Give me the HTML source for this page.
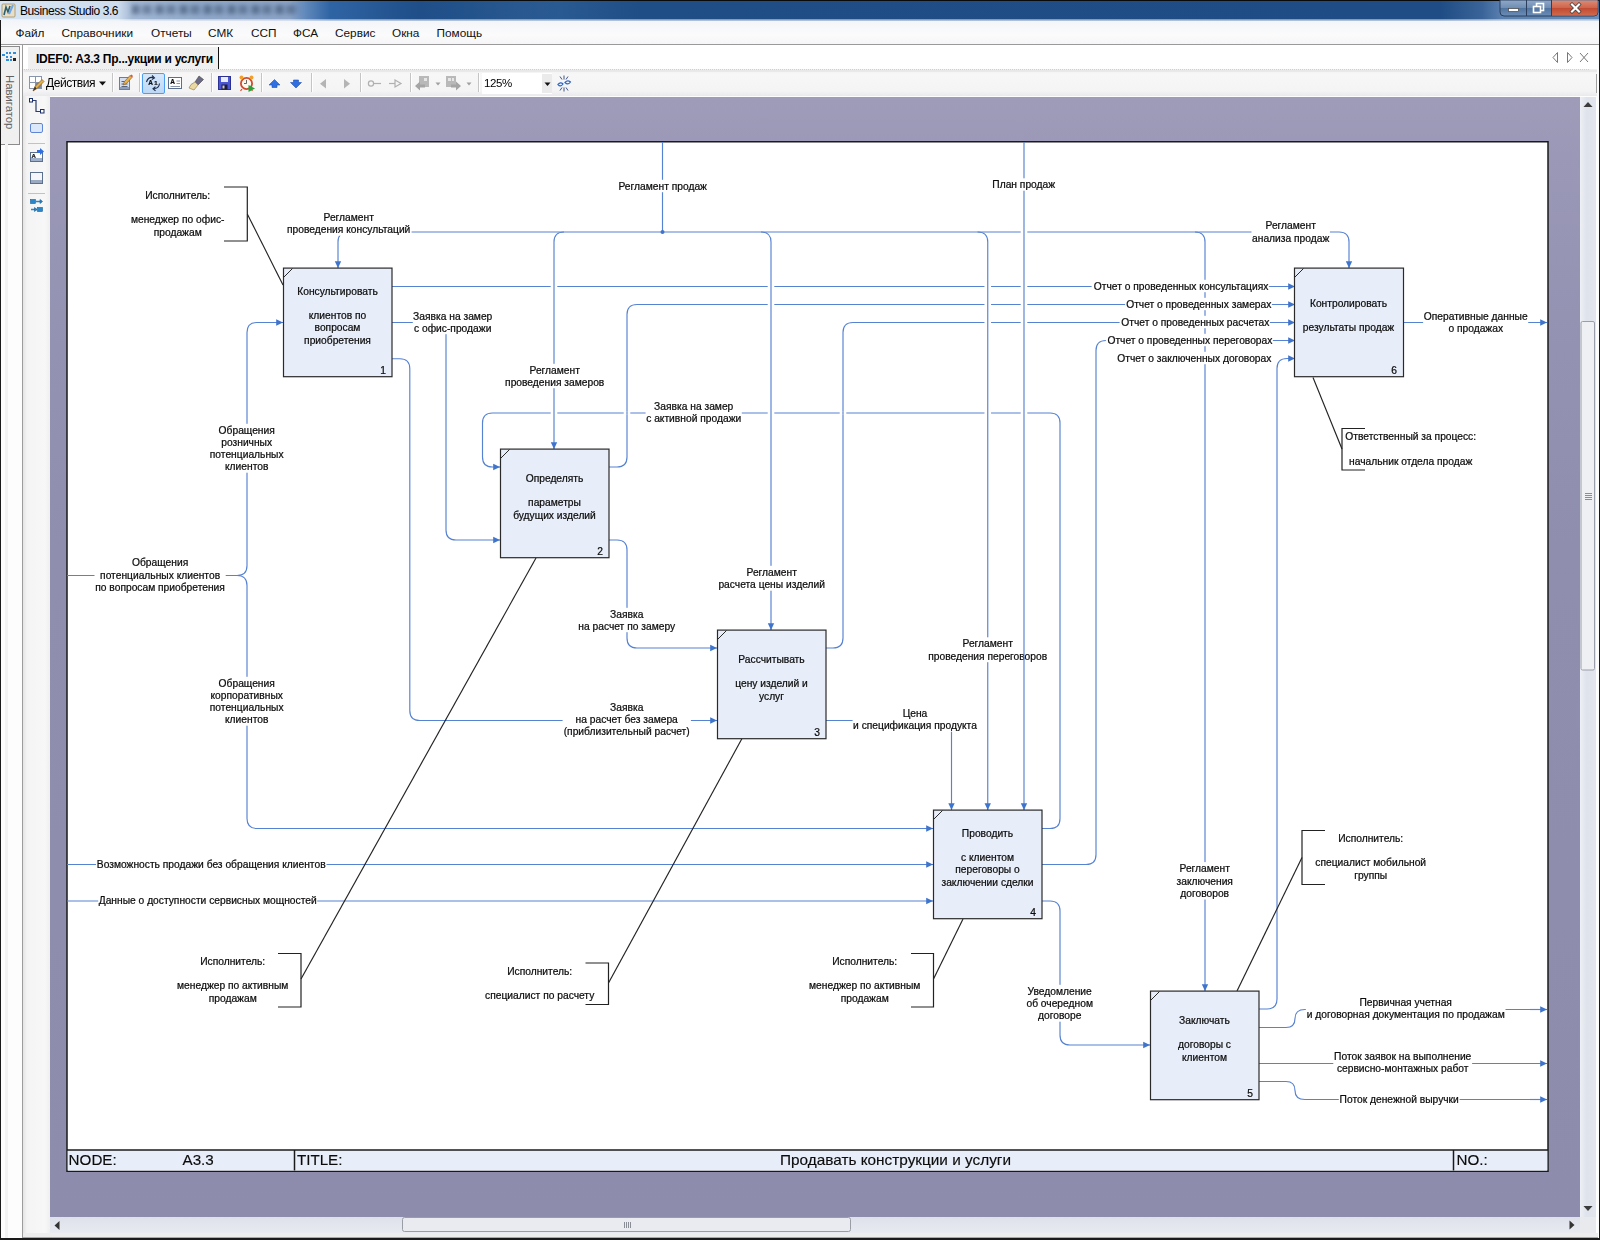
<!DOCTYPE html>
<html lang="ru">
<head>
<meta charset="utf-8">
<title>Business Studio 3.6</title>
<style>
html,body{margin:0;padding:0;}
body{width:1600px;height:1240px;overflow:hidden;position:relative;background:#fdfdfd;font-family:"Liberation Sans",sans-serif;}
.abs{position:absolute;}
#titlebar{left:0;top:0;width:1600px;height:21px;background:linear-gradient(90deg,#d6e4f3 0px,#cedded 118px,#a3b8d5 132px,#8fa8c9 200px,#8aa3c6 290px,#5f88bb 306px,#2f64a4 330px,#1f4e88 420px,#28588f 520px,#2a5a92 560px,#1f4d86 640px,#1f4c84 1440px,#3a6499 1482px,#5a80b0 1502px,#6a8fbc 1600px);}
#tblur{left:132px;top:5px;width:168px;height:9px;background:repeating-linear-gradient(90deg,rgba(50,70,100,.55) 0 7px,rgba(50,70,100,.15) 7px 11px,rgba(50,70,100,.45) 11px 19px,rgba(50,70,100,.1) 19px 24px);filter:blur(2.2px);}
#thl{left:0;top:19px;width:1600px;height:2px;background:linear-gradient(180deg,rgba(255,255,255,.35),rgba(255,255,255,.75));}
#titlebar .t{left:20px;top:3.5px;font-size:12px;letter-spacing:-0.42px;color:#000;white-space:nowrap;line-height:15px;}
#menubar{left:1px;top:21px;width:1598px;height:23px;background:linear-gradient(180deg,#f4f5f8 0%,#fbfbfc 60%,#f6f6f8 100%);border-bottom:1px solid #9a9a9a;}
#menubar span{position:absolute;top:5px;font-size:11.8px;color:#111;white-space:nowrap;line-height:14px;}
#tabrow{left:23px;top:45px;width:1575px;height:24px;background:#fff;}
#tab{left:28px;top:47px;width:190px;height:22px;background:#f0f0f0;border-right:1.5px solid #111;}
#tab span{position:absolute;left:8px;top:5px;font-size:12px;font-weight:bold;letter-spacing:-0.23px;white-space:nowrap;color:#000;line-height:14px;}
#toolbar{left:23px;top:69px;width:1574px;height:27px;background:linear-gradient(180deg,#efefef 0,#f7f7f7 5px,#f4f4f4 22px,#e9e9ee 27px);}
#navstrip{left:0;top:46px;width:18px;height:97px;background:#f0f0f0;border:1px solid #8c8c8c;}
#navtext{left:-17px;top:95px;width:54px;height:14px;transform:rotate(90deg);font-size:11.3px;color:#606060;letter-spacing:0px;line-height:14px;white-space:nowrap;text-align:center;}
#palette{left:23px;top:96px;width:27px;height:1137px;background:linear-gradient(90deg,#e4e4e4 0,#f4f4f4 4px,#f7f7f7 22px,#efefef 27px);}
#botband{left:23px;top:1233px;width:1575px;height:4px;background:#ededed;border-bottom:1px solid #a8a8a8;}
#leftline{left:22px;top:45px;width:1px;height:1193px;background:#9c9c9c;}
#canvas{left:50px;top:97px;width:1530px;height:1120px;background:linear-gradient(180deg,#9f9cba 0px,#9a98b6 60px,#9492b2 250px,#8f8eae 450px,#8d8cad 1120px);}
#vscroll{left:1580px;top:97px;width:16px;height:1120px;background:linear-gradient(90deg,#eef0f4,#dfe3ec 40%,#e2e5ee);}
#hscroll{left:50px;top:1217px;width:1530px;height:16px;background:linear-gradient(180deg,#dee1ea,#e8eaf0);}
#corner{left:1580px;top:1217px;width:16px;height:16px;background:#e9eaee;}
#page{left:66.25px;top:141px;width:1479.5px;height:1028px;background:#fff;border:1.5px solid #1a1a1a;}
#tblock{left:67.75px;top:1149.25px;width:1479.5px;height:21.25px;background:#e8eef9;border-top:1.5px solid #1a1a1a;box-sizing:border-box;}
#tblock span{position:absolute;top:0.5px;font-size:15.2px;line-height:18px;color:#111;white-space:nowrap;}
svg .tb text{font-size:15.2px;stroke-width:0.15px;}
svg text{font-family:"Liberation Sans",sans-serif;font-size:10.25px;fill:#0c0c0c;stroke:#0c0c0c;stroke-width:0.22px;}
.sep{position:absolute;top:73px;width:1px;height:19px;background:#c5c5c5;border-right:1px solid #fff;}
</style>
</head>
<body>
<div id="titlebar" class="abs"><div id="tblur" class="abs"></div><div id="thl" class="abs"></div><div class="abs t">Business Studio 3.6</div></div>
<div id="menubar" class="abs">
<span style="left:14.5px">Файл</span><span style="left:60.5px">Справочники</span><span style="left:150px">Отчеты</span><span style="left:207px">СМК</span><span style="left:250px">ССП</span><span style="left:292px">ФСА</span><span style="left:334px">Сервис</span><span style="left:391px">Окна</span><span style="left:435.5px">Помощь</span>
</div>
<div id="tabrow" class="abs"></div>
<div id="tab" class="abs"><span>IDEF0: A3.3 Пр...укции и услуги</span></div>
<div id="toolbar" class="abs"></div>
<div id="navstrip" class="abs"></div>
<div id="navtext" class="abs">Навигатор</div>
<div id="palette" class="abs"></div>
<div id="botband" class="abs"></div>
<div id="leftline" class="abs"></div>
<div id="canvas" class="abs"></div>
<div id="vscroll" class="abs"></div>
<div id="hscroll" class="abs"></div>
<div id="corner" class="abs"></div>
<svg class="abs" style="left:0;top:0;will-change:transform" width="1600" height="1240" viewBox="0 0 1600 1240">
<rect x="67" y="141.75" width="1481" height="1029.5" fill="#fff" stroke="#1a1a1a" stroke-width="1.5"/>
<rect x="67.75" y="1150" width="1479.5" height="20.5" fill="#e8eef9"/>
<line x1="67" y1="1150" x2="1548" y2="1150" stroke="#1a1a1a" stroke-width="1.5"/>
<g class="tb"><text x="68.6" y="1165.3">NODE:</text><text x="182.5" y="1165.3">A3.3</text><text x="296.9" y="1165.3">TITLE:</text><text x="895.5" y="1165.3" text-anchor="middle" style="font-size:15.35px">Продавать конструкции и услуги</text><text x="1456.5" y="1165.3">NO.:</text></g>
<path d="M348,232 L1339,232" fill="none" stroke="#5682d2" stroke-width="1.15"/>
<path d="M392,286.5 L1295,286.5" fill="none" stroke="#5682d2" stroke-width="1.15"/>
<polygon points="1295,286.5 1288.20,289.70 1288.20,283.30" fill="#3f74cc"/>
<path d="M609,467 L617.00,467.00 Q627,467 627.00,457.00 L627.00,314.50 Q627,304.5 637.00,304.50 L1295,304.5" fill="none" stroke="#5682d2" stroke-width="1.15"/>
<polygon points="1295,304.5 1288.20,307.70 1288.20,301.30" fill="#3f74cc"/>
<path d="M825,648 L833.00,648.00 Q843,648 843.00,638.00 L843.00,332.50 Q843,322.5 853.00,322.50 L1295,322.5" fill="none" stroke="#5682d2" stroke-width="1.15"/>
<polygon points="1295,322.5 1288.20,325.70 1288.20,319.30" fill="#3f74cc"/>
<path d="M1042,864.5 L1086.00,864.50 Q1096,864.5 1096.00,854.50 L1096.00,350.50 Q1096,340.5 1106.00,340.50 L1295,340.5" fill="none" stroke="#5682d2" stroke-width="1.15"/>
<polygon points="1295,340.5 1288.20,343.70 1288.20,337.30" fill="#3f74cc"/>
<path d="M1042,828.5 L1050.00,828.50 Q1060,828.5 1060.00,818.50 L1060.00,423.00 Q1060,413 1050.00,413.00 L492.50,413.00 Q482.5,413 482.50,423.00 L482.50,457.00 Q482.5,467 492.50,467.00 L500,467" fill="none" stroke="#5682d2" stroke-width="1.15"/>
<polygon points="500,467 493.20,470.20 493.20,463.80" fill="#3f74cc"/>
<rect x="550.7" y="285.0" width="6.6" height="3" fill="#fff"/>
<rect x="767.7" y="285.0" width="6.6" height="3" fill="#fff"/>
<rect x="984.45" y="285.0" width="6.6" height="3" fill="#fff"/>
<rect x="1020.7" y="285.0" width="6.6" height="3" fill="#fff"/>
<rect x="767.7" y="303.0" width="6.6" height="3" fill="#fff"/>
<rect x="984.45" y="303.0" width="6.6" height="3" fill="#fff"/>
<rect x="1020.7" y="303.0" width="6.6" height="3" fill="#fff"/>
<rect x="984.45" y="321.0" width="6.6" height="3" fill="#fff"/>
<rect x="1020.7" y="321.0" width="6.6" height="3" fill="#fff"/>
<rect x="550.7" y="411.5" width="6.6" height="3" fill="#fff"/>
<rect x="623.7" y="411.5" width="6.6" height="3" fill="#fff"/>
<rect x="767.7" y="411.5" width="6.6" height="3" fill="#fff"/>
<rect x="839.7" y="411.5" width="6.6" height="3" fill="#fff"/>
<rect x="984.45" y="411.5" width="6.6" height="3" fill="#fff"/>
<rect x="1020.7" y="411.5" width="6.6" height="3" fill="#fff"/>
<rect x="1020.7" y="230.5" width="6.6" height="3" fill="#fff"/>
<line x1="627" y1="411.5" x2="627" y2="414.5" stroke="#5682d2" stroke-width="1.15"/>
<line x1="843" y1="411.5" x2="843" y2="414.5" stroke="#5682d2" stroke-width="1.15"/>
<path d="M662.5,142 L662.5,232" fill="none" stroke="#5682d2" stroke-width="1.15"/>
<circle cx="662.5" cy="232" r="2" fill="#3f74cc"/>
<path d="M348,232 L348.00,232.00 Q338,232 338.00,242.00 L338,268" fill="none" stroke="#5682d2" stroke-width="1.15"/>
<polygon points="338,268 334.80,261.20 341.20,261.20" fill="#3f74cc"/>
<path d="M564,232 L564.00,232.00 Q554,232 554.00,242.00 L554,449" fill="none" stroke="#5682d2" stroke-width="1.15"/>
<polygon points="554,449 550.80,442.20 557.20,442.20" fill="#3f74cc"/>
<path d="M761,232 L761.00,232.00 Q771,232 771.00,242.00 L771,630" fill="none" stroke="#5682d2" stroke-width="1.15"/>
<polygon points="771,630 767.80,623.20 774.20,623.20" fill="#3f74cc"/>
<path d="M977.5,232 L977.75,232.00 Q987.75,232 987.75,242.00 L987.75,810" fill="none" stroke="#5682d2" stroke-width="1.15"/>
<polygon points="987.75,810 984.55,803.20 990.95,803.20" fill="#3f74cc"/>
<path d="M1195,232 L1195.00,232.00 Q1205,232 1205.00,242.00 L1205,991" fill="none" stroke="#5682d2" stroke-width="1.15"/>
<polygon points="1205,991 1201.80,984.20 1208.20,984.20" fill="#3f74cc"/>
<path d="M1339,232 L1339.00,232.00 Q1349,232 1349.00,242.00 L1349,268" fill="none" stroke="#5682d2" stroke-width="1.15"/>
<polygon points="1349,268 1345.80,261.20 1352.20,261.20" fill="#3f74cc"/>
<path d="M67,575.5 L237,575.5" fill="none" stroke="#5682d2" stroke-width="1.15"/>
<path d="M237,575.5 L237.00,575.50 Q247,575.5 247.00,565.50 L247.00,332.50 Q247,322.5 257.00,322.50 L283,322.5" fill="none" stroke="#5682d2" stroke-width="1.15"/>
<polygon points="283,322.5 276.20,325.70 276.20,319.30" fill="#3f74cc"/>
<path d="M237,575.5 L237.00,575.50 Q247,575.5 247.00,585.50 L247.00,818.50 Q247,828.5 257.00,828.50 L933,828.5" fill="none" stroke="#5682d2" stroke-width="1.15"/>
<polygon points="933,828.5 926.20,831.70 926.20,825.30" fill="#3f74cc"/>
<path d="M67,864.5 L933,864.5" fill="none" stroke="#5682d2" stroke-width="1.15"/>
<polygon points="933,864.5 926.20,867.70 926.20,861.30" fill="#3f74cc"/>
<path d="M67,901 L933,901" fill="none" stroke="#5682d2" stroke-width="1.15"/>
<polygon points="933,901 926.20,904.20 926.20,897.80" fill="#3f74cc"/>
<path d="M392,322.5 L436.00,322.50 Q446,322.5 446.00,332.50 L446.00,530.00 Q446,540 456.00,540.00 L500,540" fill="none" stroke="#5682d2" stroke-width="1.15"/>
<polygon points="500,540 493.20,543.20 493.20,536.80" fill="#3f74cc"/>
<path d="M392,358.7 L399.80,358.70 Q409.8,358.7 409.80,368.70 L409.80,710.50 Q409.8,720.5 419.80,720.50 L717,720.5" fill="none" stroke="#5682d2" stroke-width="1.15"/>
<polygon points="717,720.5 710.20,723.70 710.20,717.30" fill="#3f74cc"/>
<path d="M609,540 L617.00,540.00 Q627,540 627.00,550.00 L627.00,638.00 Q627,648 637.00,648.00 L717,648" fill="none" stroke="#5682d2" stroke-width="1.15"/>
<polygon points="717,648 710.20,651.20 710.20,644.80" fill="#3f74cc"/>
<path d="M825,720.5 L941.50,720.50 Q951.5,720.5 951.50,730.50 L951.5,810" fill="none" stroke="#5682d2" stroke-width="1.15"/>
<polygon points="951.5,810 948.30,803.20 954.70,803.20" fill="#3f74cc"/>
<path d="M1042,901 L1050.00,901.00 Q1060,901 1060.00,911.00 L1060.00,1035.00 Q1060,1045 1070.00,1045.00 L1150,1045" fill="none" stroke="#5682d2" stroke-width="1.15"/>
<polygon points="1150,1045 1143.20,1048.20 1143.20,1041.80" fill="#3f74cc"/>
<path d="M1258,1009 L1267.00,1009.00 Q1277,1009 1277.00,999.00 L1277.00,368.50 Q1277,358.5 1287.00,358.50 L1295,358.5" fill="none" stroke="#5682d2" stroke-width="1.15"/>
<polygon points="1295,358.5 1288.20,361.70 1288.20,355.30" fill="#3f74cc"/>
<path d="M1258,1027.5 L1286,1027.5 Q1295,1027.5 1295,1018.5 Q1295,1009.5 1305,1009.5 L1540,1009.5" fill="none" stroke="#5682d2" stroke-width="1.15"/>
<path d="M1530,1009.5 L1547,1009.5" fill="none" stroke="#5682d2" stroke-width="1.15"/>
<polygon points="1547,1009.5 1540.20,1012.70 1540.20,1006.30" fill="#3f74cc"/>
<path d="M1258,1063.5 L1547,1063.5" fill="none" stroke="#5682d2" stroke-width="1.15"/>
<polygon points="1547,1063.5 1540.20,1066.70 1540.20,1060.30" fill="#3f74cc"/>
<path d="M1258,1081.5 L1286,1081.5 Q1295,1081.5 1295,1090.5 Q1295,1099.5 1305,1099.5 L1540,1099.5" fill="none" stroke="#5682d2" stroke-width="1.15"/>
<path d="M1530,1099.5 L1547,1099.5" fill="none" stroke="#5682d2" stroke-width="1.15"/>
<polygon points="1547,1099.5 1540.20,1102.70 1540.20,1096.30" fill="#3f74cc"/>
<path d="M1403,322.5 L1547,322.5" fill="none" stroke="#5682d2" stroke-width="1.15"/>
<polygon points="1547,322.5 1540.20,325.70 1540.20,319.30" fill="#3f74cc"/>
<text x="177.7" y="198.6" text-anchor="middle">Исполнитель:</text>
<text x="177.7" y="223.1" text-anchor="middle">менеджер по офис-</text>
<text x="177.7" y="235.6" text-anchor="middle">продажам</text>
<rect x="285.9" y="210.8" width="125.7" height="24.9" fill="#fff"/>
<text x="348.7" y="220.6" text-anchor="middle">Регламент</text>
<text x="348.7" y="233.1" text-anchor="middle">проведения консультаций</text>
<rect x="617.5" y="179.8" width="90.4" height="12.4" fill="#fff"/>
<text x="662.7" y="189.6" text-anchor="middle">Регламент продаж</text>
<rect x="1251.5" y="219.3" width="78.4" height="24.9" fill="#fff"/>
<text x="1290.7" y="229.1" text-anchor="middle">Регламент</text>
<text x="1290.7" y="241.6" text-anchor="middle">анализа продаж</text>
<rect x="412.8" y="309.8" width="79.9" height="24.4" fill="#fff"/>
<text x="452.7" y="319.6" text-anchor="middle">Заявка на замер</text>
<text x="452.7" y="331.6" text-anchor="middle">с офис-продажи</text>
<rect x="504.5" y="363.8" width="100.5" height="24.4" fill="#fff"/>
<text x="554.7" y="373.6" text-anchor="middle">Регламент</text>
<text x="554.7" y="385.6" text-anchor="middle">проведения замеров</text>
<rect x="645.6" y="400.3" width="96.2" height="24.4" fill="#fff"/>
<text x="693.7" y="410.1" text-anchor="middle">Заявка на замер</text>
<text x="693.7" y="422.1" text-anchor="middle">с активной продажи</text>
<rect x="209.2" y="423.8" width="75.1" height="48.9" fill="#fff"/>
<text x="246.7" y="433.6" text-anchor="middle">Обращения</text>
<text x="246.7" y="445.6" text-anchor="middle">розничных</text>
<text x="246.7" y="458.1" text-anchor="middle">потенциальных</text>
<text x="246.7" y="470.1" text-anchor="middle">клиентов</text>
<rect x="94.5" y="555.8" width="131.2" height="37.4" fill="#fff"/>
<text x="160.1" y="565.6" text-anchor="middle">Обращения</text>
<text x="160.1" y="578.6" text-anchor="middle">потенциальных клиентов</text>
<text x="160.1" y="590.6" text-anchor="middle">по вопросам приобретения</text>
<rect x="209.2" y="676.8" width="75.1" height="48.9" fill="#fff"/>
<text x="246.7" y="686.6" text-anchor="middle">Обращения</text>
<text x="246.7" y="698.6" text-anchor="middle">корпоративных</text>
<text x="246.7" y="710.6" text-anchor="middle">потенциальных</text>
<text x="246.7" y="723.1" text-anchor="middle">клиентов</text>
<rect x="717.4" y="565.8" width="108.7" height="24.9" fill="#fff"/>
<text x="771.7" y="575.6" text-anchor="middle">Регламент</text>
<text x="771.7" y="588.1" text-anchor="middle">расчета цены изделий</text>
<rect x="577.6" y="607.8" width="98.3" height="24.4" fill="#fff"/>
<text x="626.7" y="617.6" text-anchor="middle">Заявка</text>
<text x="626.7" y="629.6" text-anchor="middle">на расчет по замеру</text>
<rect x="562.6" y="700.8" width="128.3" height="36.9" fill="#fff"/>
<text x="626.7" y="710.6" text-anchor="middle">Заявка</text>
<text x="626.7" y="722.6" text-anchor="middle">на расчет без замера</text>
<text x="626.7" y="735.1" text-anchor="middle">(приблизительный расчет)</text>
<rect x="927.4" y="637.3" width="120.6" height="24.9" fill="#fff"/>
<text x="987.7" y="647.1" text-anchor="middle">Регламент</text>
<text x="987.7" y="659.6" text-anchor="middle">проведения переговоров</text>
<rect x="852.6" y="706.8" width="124.8" height="24.9" fill="#fff"/>
<text x="915.0" y="716.6" text-anchor="middle">Цена</text>
<text x="915.0" y="729.1" text-anchor="middle">и спецификация продукта</text>
<rect x="96.0" y="857.8" width="230.5" height="12.4" fill="#fff"/>
<text x="211.2" y="867.6" text-anchor="middle">Возможность продажи без обращения клиентов</text>
<rect x="98.2" y="894.3" width="219.0" height="12.4" fill="#fff"/>
<text x="207.7" y="904.1" text-anchor="middle">Данные о доступности сервисных мощностей</text>
<rect x="1176.0" y="862.1" width="57.4" height="37.4" fill="#fff"/>
<text x="1204.7" y="871.9" text-anchor="middle">Регламент</text>
<text x="1204.7" y="884.6" text-anchor="middle">заключения</text>
<text x="1204.7" y="896.9" text-anchor="middle">договоров</text>
<rect x="1025.7" y="984.8" width="68.0" height="36.9" fill="#fff"/>
<text x="1059.7" y="994.6" text-anchor="middle">Уведомление</text>
<text x="1059.7" y="1006.6" text-anchor="middle">об очередном</text>
<text x="1059.7" y="1019.1" text-anchor="middle">договоре</text>
<rect x="1091.6" y="279.8" width="177.3" height="12.4" fill="#fff"/>
<text x="1268.4" y="289.6" text-anchor="end">Отчет о проведенных консультациях</text>
<rect x="1125.1" y="297.8" width="146.8" height="12.4" fill="#fff"/>
<text x="1271.4" y="307.6" text-anchor="end">Отчет о проведенных замерах</text>
<rect x="1119.6" y="315.8" width="150.3" height="12.4" fill="#fff"/>
<text x="1269.4" y="325.6" text-anchor="end">Отчет о проведенных расчетах</text>
<rect x="1105.9" y="333.8" width="167.0" height="12.4" fill="#fff"/>
<text x="1272.4" y="343.6" text-anchor="end">Отчет о проведенных переговорах</text>
<rect x="1116.2" y="351.8" width="155.7" height="12.4" fill="#fff"/>
<text x="1271.4" y="361.6" text-anchor="end">Отчет о заключенных договорах</text>
<rect x="1423.1" y="309.8" width="105.1" height="24.4" fill="#fff"/>
<text x="1475.7" y="319.6" text-anchor="middle">Оперативные данные</text>
<text x="1475.7" y="331.6" text-anchor="middle">о продажах</text>
<text x="1410.7" y="439.6" text-anchor="middle">Ответственный за процесс:</text>
<text x="1410.7" y="464.6" text-anchor="middle">начальник отдела продаж</text>
<text x="232.7" y="964.6" text-anchor="middle">Исполнитель:</text>
<text x="232.7" y="989.1" text-anchor="middle">менеджер по активным</text>
<text x="232.7" y="1001.6" text-anchor="middle">продажам</text>
<text x="539.7" y="974.6" text-anchor="middle">Исполнитель:</text>
<text x="539.7" y="999.1" text-anchor="middle">специалист по расчету</text>
<text x="864.7" y="964.6" text-anchor="middle">Исполнитель:</text>
<text x="864.7" y="989.1" text-anchor="middle">менеджер по активным</text>
<text x="864.7" y="1001.6" text-anchor="middle">продажам</text>
<text x="1370.7" y="842.1" text-anchor="middle">Исполнитель:</text>
<text x="1370.7" y="866.1" text-anchor="middle">специалист мобильной</text>
<text x="1370.7" y="878.6" text-anchor="middle">группы</text>
<rect x="1305.8" y="995.8" width="199.7" height="24.9" fill="#fff"/>
<text x="1405.7" y="1005.6" text-anchor="middle">Первичная учетная</text>
<text x="1405.7" y="1018.1" text-anchor="middle">и договорная документация по продажам</text>
<rect x="1333.3" y="1049.8" width="138.8" height="24.9" fill="#fff"/>
<text x="1402.7" y="1059.6" text-anchor="middle">Поток заявок на выполнение</text>
<text x="1402.7" y="1072.1" text-anchor="middle">сервисно-монтажных работ</text>
<rect x="1338.8" y="1092.8" width="120.8" height="12.4" fill="#fff"/>
<text x="1399.2" y="1102.6" text-anchor="middle">Поток денежной выручки</text>
<path d="M1024,142 L1024,810" fill="none" stroke="#5682d2" stroke-width="1.15"/>
<polygon points="1024,810 1020.80,803.20 1027.20,803.20" fill="#3f74cc"/>
<rect x="991.7" y="178.3" width="64.0" height="12.4" fill="#fff"/>
<text x="1023.7" y="188.1" text-anchor="middle">План продаж</text>
<path d="M224,187 L247.3,187 L247.3,241 L224,241" fill="none" stroke="#222" stroke-width="1.2"/>
<line x1="247.3" y1="214" x2="283" y2="285" stroke="#222" stroke-width="1.15"/>
<path d="M278,953.5 L301,953.5 L301,1007 L278,1007" fill="none" stroke="#222" stroke-width="1.2"/>
<line x1="301" y1="979" x2="536" y2="558" stroke="#222" stroke-width="1.15"/>
<path d="M585.5,963 L608.5,963 L608.5,1004.5 L585.5,1004.5" fill="none" stroke="#222" stroke-width="1.2"/>
<line x1="608.5" y1="983" x2="742" y2="738.5" stroke="#222" stroke-width="1.15"/>
<path d="M911,953.5 L933.5,953.5 L933.5,1007 L911,1007" fill="none" stroke="#222" stroke-width="1.2"/>
<line x1="933.5" y1="979" x2="963" y2="919" stroke="#222" stroke-width="1.15"/>
<path d="M1325,830.5 L1302,830.5 L1302,884.5 L1325,884.5" fill="none" stroke="#222" stroke-width="1.2"/>
<line x1="1302" y1="857.5" x2="1237" y2="991" stroke="#222" stroke-width="1.15"/>
<path d="M1365,428.5 L1342,428.5 L1342,470 L1365,470" fill="none" stroke="#222" stroke-width="1.2"/>
<line x1="1342" y1="449" x2="1313" y2="377.5" stroke="#222" stroke-width="1.15"/>
<rect x="283.5" y="268.1" width="108.5" height="108.6" fill="#e8eef9" stroke="#2a2a2a" stroke-width="1.2"/>
<line x1="283.5" y1="277.5" x2="292.5" y2="268.5" stroke="#2a2a2a" stroke-width="1"/>
<text x="386" y="373.5" text-anchor="end">1</text>
<text x="337.5" y="294.5" text-anchor="middle">Консультировать</text>
<text x="337.5" y="319.1" text-anchor="middle">клиентов по</text>
<text x="337.5" y="331.4" text-anchor="middle">вопросам</text>
<text x="337.5" y="343.7" text-anchor="middle">приобретения</text>
<rect x="500.5" y="449.1" width="108.5" height="108.6" fill="#e8eef9" stroke="#2a2a2a" stroke-width="1.2"/>
<line x1="500.5" y1="458.5" x2="509.5" y2="449.5" stroke="#2a2a2a" stroke-width="1"/>
<text x="603" y="554.5" text-anchor="end">2</text>
<text x="554.5" y="481.7" text-anchor="middle">Определять</text>
<text x="554.5" y="506.3" text-anchor="middle">параметры</text>
<text x="554.5" y="518.6" text-anchor="middle">будущих изделий</text>
<rect x="717.5" y="630.1" width="108.5" height="108.6" fill="#e8eef9" stroke="#2a2a2a" stroke-width="1.2"/>
<line x1="717.5" y1="639.5" x2="726.5" y2="630.5" stroke="#2a2a2a" stroke-width="1"/>
<text x="820" y="735.5" text-anchor="end">3</text>
<text x="771.5" y="662.6" text-anchor="middle">Рассчитывать</text>
<text x="771.5" y="687.2" text-anchor="middle">цену изделий и</text>
<text x="771.5" y="699.5" text-anchor="middle">услуг</text>
<rect x="933.5" y="810.1" width="108.5" height="108.6" fill="#e8eef9" stroke="#2a2a2a" stroke-width="1.2"/>
<line x1="933.5" y1="819.5" x2="942.5" y2="810.5" stroke="#2a2a2a" stroke-width="1"/>
<text x="1036" y="915.5" text-anchor="end">4</text>
<text x="987.5" y="836.5" text-anchor="middle">Проводить</text>
<text x="987.5" y="861.1" text-anchor="middle">с клиентом</text>
<text x="987.5" y="873.4" text-anchor="middle">переговоры о</text>
<text x="987.5" y="885.7" text-anchor="middle">заключении сделки</text>
<rect x="1150.5" y="991.1" width="108.5" height="108.6" fill="#e8eef9" stroke="#2a2a2a" stroke-width="1.2"/>
<line x1="1150.5" y1="1000.5" x2="1159.5" y2="991.5" stroke="#2a2a2a" stroke-width="1"/>
<text x="1253" y="1096.5" text-anchor="end">5</text>
<text x="1204.5" y="1023.6" text-anchor="middle">Заключать</text>
<text x="1204.5" y="1048.2" text-anchor="middle">договоры с</text>
<text x="1204.5" y="1060.5" text-anchor="middle">клиентом</text>
<rect x="1294.5" y="268.1" width="109" height="108.6" fill="#e8eef9" stroke="#2a2a2a" stroke-width="1.2"/>
<line x1="1294.5" y1="277.5" x2="1303.5" y2="268.5" stroke="#2a2a2a" stroke-width="1"/>
<text x="1397" y="373.5" text-anchor="end">6</text>
<text x="1348.5" y="306.8" text-anchor="middle">Контролировать</text>
<text x="1348.5" y="331.4" text-anchor="middle">результаты продаж</text>
<line x1="294.5" y1="1150" x2="294.5" y2="1170.5" stroke="#1a1a1a" stroke-width="1.5"/>
<line x1="1453.5" y1="1150" x2="1453.5" y2="1170.5" stroke="#1a1a1a" stroke-width="1.5"/>
</svg>
<svg class="abs" style="left:0;top:0" width="1600" height="1240" viewBox="0 0 1600 1240">
<defs>
<linearGradient id="gbtn" x1="0" y1="0" x2="0" y2="1"><stop offset="0" stop-color="#8fa9c9"/><stop offset="0.5" stop-color="#6f8db3"/><stop offset="0.5" stop-color="#4f739f"/><stop offset="1" stop-color="#6d8db5"/></linearGradient>
<linearGradient id="gcls" x1="0" y1="0" x2="0" y2="1"><stop offset="0" stop-color="#dc8a75"/><stop offset="0.5" stop-color="#cf634a"/><stop offset="0.5" stop-color="#c04a32"/><stop offset="1" stop-color="#cf6a4e"/></linearGradient>
<linearGradient id="gsel" x1="0" y1="0" x2="0" y2="1"><stop offset="0" stop-color="#d6e8fb"/><stop offset="1" stop-color="#bcd8f6"/></linearGradient>
</defs>
<!-- window outer borders -->
<rect x="0" y="0" width="1600" height="1" fill="#0a0a0a"/>
<rect x="1599" y="0" width="1" height="1240" fill="#1a1a1a"/>
<rect x="0" y="20" width="1" height="1220" fill="#1a1a1a"/>
<rect x="5" y="144" width="3" height="1094" fill="#f3f3f3"/>
<rect x="0" y="1238" width="1600" height="2" fill="#1a1a1a"/>
<!-- app icon -->
<rect x="2" y="4" width="13" height="13" rx="1" fill="#e9dfc8" stroke="#a08f6a" stroke-width="0.8"/>
<path d="M4,15 L6,7 L8,12 L10,6" stroke="#2c5f6e" stroke-width="1.6" fill="none"/>
<path d="M9,14 L13,5" stroke="#6aa6e8" stroke-width="2" fill="none"/>
<!-- window buttons -->
<path d="M1500,0 L1598,0 L1598,12 Q1598,16 1594,16 L1504,16 Q1500,16 1500,12 Z" fill="url(#gbtn)" stroke="#2b3f5c" stroke-width="1"/>
<path d="M1552,0.5 L1597.5,0.5 L1597.5,12 Q1597.5,15.5 1594,15.5 L1552,15.5 Z" fill="url(#gcls)"/>
<line x1="1526.5" y1="0" x2="1526.5" y2="16" stroke="#2b3f5c" stroke-width="1"/>
<line x1="1551.5" y1="0" x2="1551.5" y2="16" stroke="#2b3f5c" stroke-width="1"/>
<rect x="1508.5" y="8.5" width="10" height="3" fill="#fff" stroke="#444" stroke-width="0.7"/>
<rect x="1536.500" y="3.500" width="7" height="7" fill="none" stroke="#fff" stroke-width="1.6"/>
<rect x="1533.500" y="6.500" width="7" height="6" fill="#5a7ba5" stroke="#fff" stroke-width="1.6"/>
<path d="M1572,4.500 L1579,11.500 M1579,4.500 L1572,11.500" stroke="#3a3a3a" stroke-width="3.6" stroke-linecap="square"/>
<path d="M1572,4.500 L1579,11.500 M1579,4.500 L1572,11.500" stroke="#fff" stroke-width="2.2" stroke-linecap="square"/>
<!-- tab row right icons -->
<path d="M1557.500,52.500 L1557.500,62.500 L1553,57.500 Z" fill="none" stroke="#777" stroke-width="1"/>
<path d="M1567.500,52.500 L1567.500,62.500 L1572,57.500 Z" fill="none" stroke="#777" stroke-width="1"/>
<path d="M1580,53 L1588,62 M1588,53 L1580,62" stroke="#777" stroke-width="1"/>
<!-- navigator mini icon -->
<g fill="#2f8de0"><rect x="2" y="54" width="3" height="2"/><rect x="6" y="52" width="2" height="2"/><rect x="9" y="52" width="2" height="2"/><rect x="13" y="52" width="3" height="2"/><rect x="6" y="56" width="2" height="2"/><rect x="10" y="56" width="2" height="2"/><rect x="6" y="59" width="3" height="2"/><rect x="10" y="59" width="2" height="2"/></g>
<rect x="13" y="58" width="3" height="3" fill="#222"/>
<!-- toolbar dotted top line -->
<line x1="24" y1="69.500" x2="1590" y2="69.500" stroke="#d0d0d0" stroke-width="1" stroke-dasharray="1,1"/>
<line x1="1596.500" y1="74" x2="1596.500" y2="93" stroke="#a0a0a0"/>
<rect x="24" y="70" width="1573" height="2" fill="#e4e4e4" opacity="0.7"/>
<!-- grid + pencil icon -->
<g><rect x="29.500" y="76.500" width="12" height="12" fill="#fff" stroke="#8796ad"/><line x1="35.500" y1="76.500" x2="35.500" y2="88.500" stroke="#8796ad"/><line x1="29.500" y1="82.500" x2="41.500" y2="82.500" stroke="#8796ad"/><rect x="36" y="83" width="5" height="5" fill="#7c8aa3"/><path d="M33,91 L35,86.500 L42,79.500 L44,81.500 L37,88.500 Z" fill="#e2b04a" stroke="#8a5a1c" stroke-width="0.7"/><path d="M33,91 L35,86.500 L36.500,88.500 Z" fill="#333"/></g>
<path d="M99,81.500 L106,81.500 L102.500,85.500 Z" fill="#111"/>
<!-- edit icon -->
<g><rect x="119.500" y="77.500" width="10" height="12" fill="#d5deee" stroke="#6d7d97"/><rect x="120" y="87" width="9" height="2" fill="#8e9ebb"/><path d="M121.500,81.500 h5 M121.500,84 h6 M121.500,86.500 h6" stroke="#55627a" stroke-width="1"/><path d="M123,85 L124.500,81.500 L130,75.500 L132,77.500 L126.500,83.500 Z" fill="#e6b24e" stroke="#9a5f1e" stroke-width="0.7"/><path d="M130,75.500 L132,77.500 L133,76 L131.500,74.500 Z" fill="#d9534a"/></g>
<!-- selected button -->
<rect x="142.500" y="73.500" width="22" height="20" rx="1.5" fill="url(#gsel)" stroke="#4e9df0"/>
<g fill="none" stroke="#1d2d4d" stroke-width="1.1"><path d="M146.500,82 Q148,76.500 153.500,77.500"/><path d="M152,75.500 L154.500,77.800 L151.800,79.500"/><path d="M159.500,83.500 Q159,88.500 153.500,88.800"/><path d="M155.500,90.800 L153,88.800 L155.500,86.800"/></g>
<text x="148.3" y="85.3" style="font:bold 6.5px 'Liberation Sans',sans-serif;fill:#111">A</text><text x="154.3" y="85.3" style="font:bold 6px 'Liberation Sans',sans-serif;fill:#111">1</text>
<!-- A text icon -->
<g><rect x="168.500" y="77.500" width="13" height="11" fill="#fff" stroke="#5b6f8f"/><path d="M176.500,81 h3.500 M176.500,83.500 h3.500 M170.500,86.500 h9.500" stroke="#8a96aa" stroke-width="1"/></g>
<text x="170.3" y="84.3" style="font:bold 6.5px 'Liberation Sans',sans-serif;fill:#111">A</text>
<!-- brush icon -->
<g><path d="M199,76 L203.500,79.500 L198,85 L195,82 Z" fill="#6a6a86" stroke="#444" stroke-width="0.6"/><path d="M195,82 L198,85 L194,90 L189,88 Q190,84 195,82 Z" fill="#ead9a4" stroke="#9b8645" stroke-width="0.7"/></g>
<!-- save icon -->
<g><rect x="218.500" y="76.500" width="12" height="13" fill="#4b56d2" stroke="#2a3192"/><rect x="221" y="77" width="7" height="5" fill="#e8ecff"/><rect x="221.500" y="84.500" width="6" height="5" fill="#1c1c3a"/><rect x="222.500" y="85.500" width="2" height="3" fill="#c8c8d8"/></g>
<!-- alarm clock icon -->
<g><circle cx="246.500" cy="83.500" r="5.600" fill="#fdf7ee" stroke="#d4482c" stroke-width="1.8"/><circle cx="241.500" cy="77.500" r="2" fill="#f0a030"/><circle cx="251.500" cy="77.500" r="2" fill="#f0a030"/><path d="M246.500,80 v3.500 h-2.500" stroke="#555" stroke-width="0.9" fill="none"/><path d="M242,89 l-1.500,2 M251,89 l1.500,2" stroke="#d4482c" stroke-width="1.2"/><path d="M248.500,85 L255,88.500 L248.500,92 Z" fill="#22a33a"/></g>
<!-- up/down arrows -->
<path d="M274.500,79.500 L280,85 L277,85 L277,87.500 L272,87.500 L272,85 L269,85 Z" fill="#2f6fe0" stroke="#1d4fb3" stroke-width="0.6"/>
<path d="M296,88 L301.500,82.500 L298.500,82.500 L298.500,80 L293.500,80 L293.500,82.500 L290.500,82.500 Z" fill="#2f6fe0" stroke="#1d4fb3" stroke-width="0.6"/>
<!-- disabled nav triangles -->
<path d="M326,79 L326,88.500 L320,83.700 Z" fill="#b4b4b4"/>
<path d="M344,79 L344,88.500 L350,83.700 Z" fill="#b4b4b4"/>
<g stroke="#b0b0b0" fill="none" stroke-width="1.2"><circle cx="371" cy="83.500" r="2.600"/><path d="M373.600,83.500 H381"/><path d="M389,83.500 H395"/><path d="M395,80 L401,83.500 L395,87 Z"/></g>
<!-- gray page icons -->
<g fill="#b9b9b9"><rect x="419" y="76" width="10" height="11"/><path d="M415,86 L420,81.500 L420,84.500 L425,84.500 L425,87.500 L420,87.500 L420,90.500 Z" fill="#a5a5a5"/><rect x="424" y="78" width="3" height="3" fill="#e6e6e6"/></g>
<path d="M435.500,82.500 L440.500,82.500 L438,85.500 Z" fill="#a0a0a0"/>
<g fill="#b9b9b9"><rect x="446" y="76" width="10" height="11"/><path d="M461,86 L456,81.500 L456,84.500 L451,84.500 L451,87.500 L456,87.500 L456,90.500 Z" fill="#a5a5a5"/><rect x="448" y="78" width="3" height="3" fill="#e6e6e6"/><rect x="452" y="78" width="2" height="3" fill="#e6e6e6"/></g>
<path d="M466.500,82.500 L471.500,82.500 L469,85.500 Z" fill="#a0a0a0"/>
<!-- combobox -->
<rect x="482" y="73" width="70" height="21" fill="#fff"/>
<rect x="542" y="74" width="10" height="19" fill="#ebebeb"/>
<path d="M544.500,82.500 L550.500,82.500 L547.500,86 Z" fill="#111"/>
<!-- link icon -->
<g stroke="#2f66c8" stroke-width="1.2" fill="none"><path d="M558,84.500 q2.500,-3 5,-0.500 q-2.500,3.500 -5,0.500 Z"/><path d="M565,82.500 q2.500,-3 5.500,-0.500 q-2.500,3.500 -5.500,0.500 Z"/></g>
<g stroke="#2b3f7a" stroke-width="0.9"><path d="M564,75.500 v4 M564,87.500 v4 M560,76.500 l2,3 M568,76.500 l-2,3 M560,90.500 l2,-3 M568,90.500 l-2,-3"/></g>
<!-- palette icons -->
<g stroke="#1b2f6b" fill="#fff" stroke-width="1"><path d="M32.500,100.500 H36 V111.500 H41" fill="none" stroke="#2a3b6e" stroke-width="1.2"/><rect x="29.500" y="98.500" width="3" height="3.500"/><rect x="40.500" y="109.500" width="3.500" height="3.500"/></g>
<rect x="30.500" y="123.500" width="12" height="9" rx="1.5" fill="#dbe7fb" stroke="#5f86d6"/>
<line x1="28" y1="143.500" x2="45" y2="143.500" stroke="#c2c2c2"/>
<g><rect x="30.500" y="152.500" width="12" height="9" fill="#fff" stroke="#5b6f8f"/><rect x="31" y="158" width="11" height="3" fill="#9fb0cc"/><path d="M37,150 h3 v-2 l4,3.500 l-4,3.500 v-2 h-3 Z" fill="#2f6fe0"/></g>
<g><rect x="30.500" y="172.500" width="12" height="11" fill="#f4f6fb" stroke="#5b6f8f"/><rect x="31" y="180" width="11" height="3" fill="#9aa8c2"/></g>
<text x="31.5" y="157.5" style="font:bold 6px 'Liberation Sans',sans-serif;fill:#111">A</text>
<line x1="28" y1="193.500" x2="45" y2="193.500" stroke="#c2c2c2"/>
<g fill="#2a86c8" stroke="#1c5f96" stroke-width="0.6"><rect x="30.500" y="199.500" width="5" height="4"/><rect x="37.500" y="207.500" width="5" height="4"/><path d="M36,201.500 h6 M31,209.500 h6" stroke="#2a86c8" stroke-width="1.4"/><path d="M40,199.500 l2.500,2 l-2.500,2 Z M34.500,207.500 l2.500,2 l-2.500,2 Z"/></g>
<!-- vertical scrollbar -->
<path d="M1583.500,107 L1592.500,107 L1588,102 Z" fill="#3c3c3c"/>
<path d="M1583.500,1206 L1592.500,1206 L1588,1211 Z" fill="#3c3c3c"/>
<rect x="1581" y="321.500" width="13.500" height="348.500" rx="1.5" fill="#eef0f4" stroke="#9a9eaa"/>
<path d="M1585,493.500 h7 M1585,495.500 h7 M1585,497.500 h7 M1585,499.500 h7" stroke="#8a8c96" stroke-width="1"/>
<!-- horizontal scrollbar -->
<path d="M59.500,1221 L59.500,1230 L54.500,1225.500 Z" fill="#333"/>
<path d="M1569.500,1220.500 L1569.500,1229.500 L1574.500,1225 Z" fill="#333"/>
<rect x="402.500" y="1217.500" width="448" height="14" rx="2" fill="#e9ebf0" stroke="#9a9ca6"/>
<path d="M624.500,1222 v6 M626.500,1222 v6 M628.500,1222 v6 M630.500,1222 v6" stroke="#8a8c96" stroke-width="1"/>
</svg>
<div class="sep" style="left:112px"></div><div class="sep" style="left:139px"></div><div class="sep" style="left:211px"></div><div class="sep" style="left:261px"></div><div class="sep" style="left:311px"></div><div class="sep" style="left:360px"></div><div class="sep" style="left:410px"></div><div class="sep" style="left:478px"></div>
<div class="abs" style="left:46px;top:76px;font-size:12px;letter-spacing:-0.45px;line-height:15px;color:#000;white-space:nowrap">Действия</div>
<div class="abs" style="left:484px;top:76px;font-size:11.5px;letter-spacing:-0.4px;line-height:15px;color:#000;white-space:nowrap">125%</div>

</body>
</html>
